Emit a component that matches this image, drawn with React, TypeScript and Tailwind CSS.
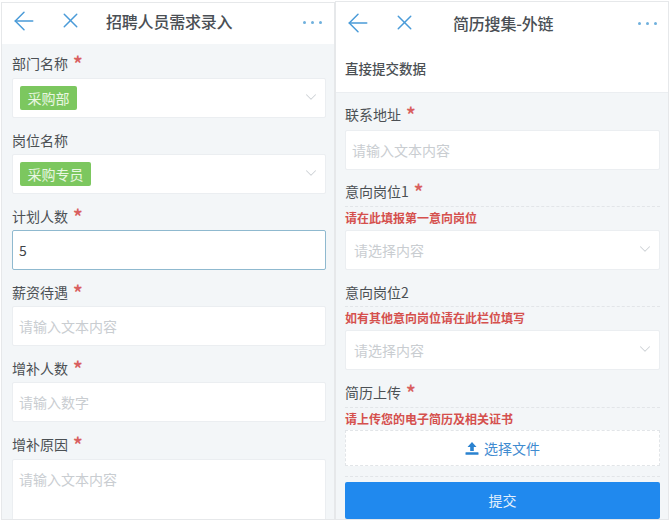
import React from "react";
import { ArrowLeft, X, ChevronDown } from "lucide-react";

const font = "font-['Noto_Sans_CJK_SC','Noto_Sans',sans-serif]";

function Header({ title, titleClass, iconTop, xTop, dotsClass }: { title: string; titleClass: string; iconTop: string; xTop: string; dotsClass: string }) {
  return (
    <div className="h-[41px] shrink-0 bg-white relative">
      <ArrowLeft className={`absolute left-[7px] text-[#4a9bd8] ${iconTop}`} size={30} strokeWidth={1.2} />
      <X className={`absolute left-[56px] text-[#4a9bd8] ${xTop}`} size={25} strokeWidth={1.4} />
      <div className={`absolute text-[16px] tracking-[-0.2px] leading-[22px] font-medium text-[#4a4f55] ${titleClass}`}>{title}</div>
      <div className={`absolute flex gap-[5px] ${dotsClass}`}>
        <span className="w-[3px] h-[3px] rounded-full bg-[#6fb0dd]" />
        <span className="w-[3px] h-[3px] rounded-full bg-[#6fb0dd]" />
        <span className="w-[3px] h-[3px] rounded-full bg-[#6fb0dd]" />
      </div>
    </div>
  );
}

function Label({ text, star, className = "" }: { text: string; star?: boolean; className?: string }) {
  return (
    <div className={`h-[20px] flex items-center text-[14px] leading-[20px] text-[#4b5054] ${className}`}>
      {text}
      {star && <span className="ml-[5px] text-[#d9605f] text-[19px] leading-[20px] font-bold">*</span>}
    </div>
  );
}

function Box({ children, className = "" }: { children?: React.ReactNode; className?: string }) {
  return (
    <div className={`h-[40px] bg-white rounded-[2px] border border-[#ebeef1] flex items-center relative ${className}`}>
      {children}
    </div>
  );
}

function Hint({ children }: { children: string }) {
  return <span className="block text-[14px] leading-[20px] text-[#c9cdd1]">{children}</span>;
}

function Chevron() {
  return <ChevronDown className="absolute right-[5px] top-[9px] text-[#ced2d6]" size={18} strokeWidth={1.4} />;
}

function Tag({ children }: { children: string }) {
  return (
    <span className="ml-[7px] h-[24px] px-[7.5px] rounded-[2px] bg-[#7cc75f] text-[#e9f7e2] text-[14px] leading-[24px]">
      {children}
    </span>
  );
}

function Note({ children, className = "mt-[5px] h-[24px]" }: { children: string; className?: string }) {
  return (
    <div className={`border-t border-dashed border-[#e2e5e8] pt-[1px] text-[12px] leading-[19px] font-bold text-[#d5504d] ${className}`}>
      {children}
    </div>
  );
}

export default function App() {
  return (
    <div className={`w-[670px] h-[521px] bg-white flex overflow-hidden ${font}`}>
      <div className="ml-[2px] mt-[3px] w-[332px] h-[516px] bg-[#f3f6f8] flex flex-col overflow-hidden outline outline-[#e6e8ea]">
        <Header
          title="招聘人员需求录入"
          titleClass="left-[104px] top-[7px]"
          iconTop="top-[3px]"
          xTop="top-[5px]"
          dotsClass="right-[12px] top-[18px]"
        />
        <div className="pl-[10px] pr-[8px] pt-[9px] flex flex-col">
          <Label text="部门名称" star />
          <Box className="mt-[5px]">
            <Tag>采购部</Tag>
            <Chevron />
          </Box>
          <Label text="岗位名称" className="mt-[12px]" />
          <Box className="mt-[4px]">
            <Tag>采购专员</Tag>
            <Chevron />
          </Box>
          <Label text="计划人数" star className="mt-[12px]" />
          <Box className="mt-[4px] !border-[#8fb9cf] pl-[6px]">
            <span className="text-[14px] text-[#3f4448]">5</span>
          </Box>
          <Label text="薪资待遇" star className="mt-[12px]" />
          <Box className="mt-[4px] pl-[6px]"><Hint>请输入文本内容</Hint></Box>
          <Label text="增补人数" star className="mt-[12px]" />
          <Box className="mt-[4px] pl-[6px]"><Hint>请输入数字</Hint></Box>
          <Label text="增补原因" star className="mt-[12px]" />
          <div className="mt-[5px] h-[62px] bg-white border border-[#ebeef1] rounded-[2px] pl-[6px] pt-[9px]">
            <Hint>请输入文本内容</Hint>
          </div>
        </div>
      </div>

      <div className="ml-[2px] mt-[2px] w-[332px] h-[517px] bg-[#f3f6f8] flex flex-col overflow-hidden outline outline-[#e6e8ea]">
        <Header
          title="简历搜集-外链"
          titleClass="left-[117px] top-[10px]"
          iconTop="top-[6px]"
          xTop="top-[8px]"
          dotsClass="right-[11px] top-[20px]"
        />
        <div className="h-[50px] shrink-0 bg-white border-b border-[#ebeef1] pl-[9px] pt-[2px] flex items-center text-[13.5px] font-medium text-[#4b5054]">
          直接提交数据
        </div>
        <div className="pl-[9px] pr-[8px] pt-[11px] flex flex-col">
          <Label text="联系地址" star />
          <Box className="mt-[6px] pl-[6px]"><Hint>请输入文本内容</Hint></Box>
          <Label text="意向岗位1" star className="mt-[11px]" />
          <Note>请在此填报第一意向岗位</Note>
          <Box className="pl-[8px]"><Hint>请选择内容</Hint><Chevron /></Box>
          <Label text="意向岗位2" className="mt-[12px]" />
          <Note className="mt-[4px] h-[24px]">如有其他意向岗位请在此栏位填写</Note>
          <Box className="pl-[8px]"><Hint>请选择内容</Hint><Chevron /></Box>
          <Label text="简历上传" star className="mt-[12px]" />
          <Note className="mt-[5px] h-[23px]">请上传您的电子简历及相关证书</Note>
          <div className="h-[36px] bg-white border border-dashed border-[#e2e5e8] flex items-center justify-center gap-[5px] text-[14px] text-[#3f8bd0]">
            <svg width="14" height="13" viewBox="0 0 14 13" fill="#2a82d0">
              <path d="M7 0 L11.5 5 H8.8 V9 H5.2 V5 H2.5 Z" />
              <rect x="0.5" y="10.2" width="13" height="2.6" rx="0.6" />
            </svg>
            选择文件
          </div>
          <div className="mt-[10px] border-t border-dashed border-[#e2e5e8]" />
          <div className="mt-[5px] h-[37px] rounded-[2px] bg-[#2089ee] flex items-center justify-center text-[14px] text-[#e3f0fc]">
            提交
          </div>
        </div>
      </div>
    </div>
  );
}
